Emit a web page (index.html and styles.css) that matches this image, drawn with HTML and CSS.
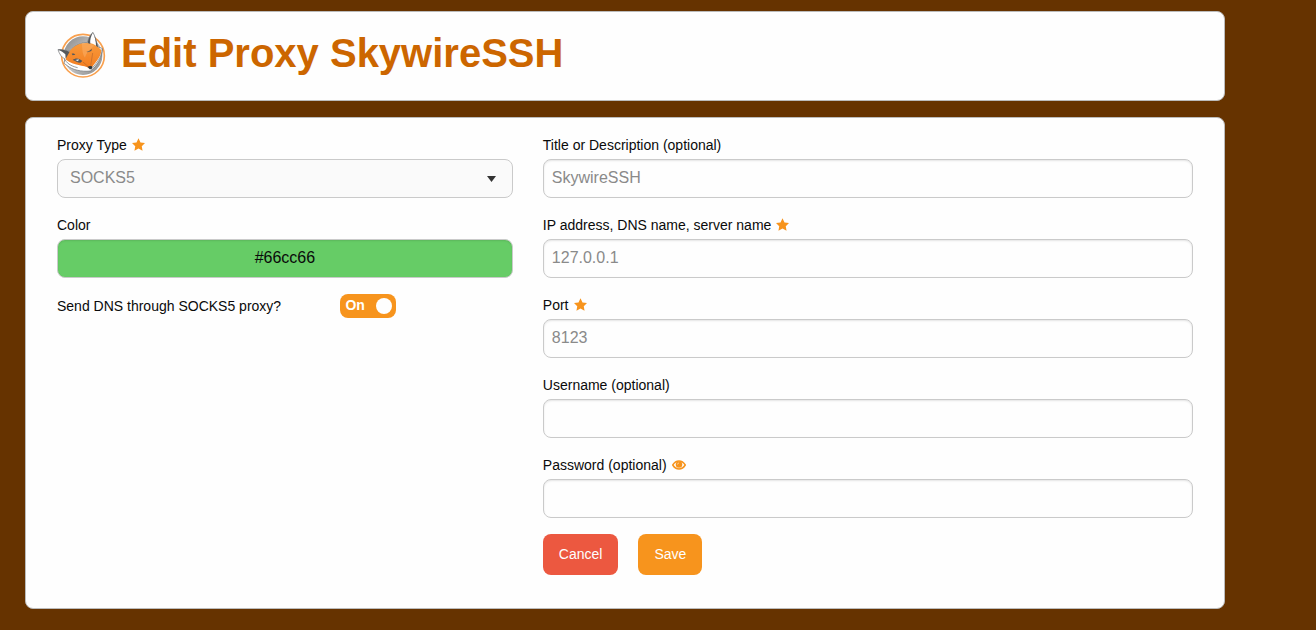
FILE: index.html
```html
<!DOCTYPE html>
<html lang="en">
<head>
<meta charset="utf-8">
<meta name="viewport" content="width=device-width, initial-scale=1">
<title>Edit Proxy SkywireSSH</title>
<link rel="stylesheet" href="styles.css">
</head>
<body>
<svg class="sprite" aria-hidden="true">
  <symbol id="star" viewBox="0 0 26 25"><path d="M13 0l4 8.300 9 1.300-6.500 6.300 1.600 9L13 20.600 4.900 24.900l1.600-9L0 9.600l9-1.300z"/></symbol>
</svg>
<main class="page">
  <header class="card card-header">
    <svg class="logo" viewBox="21 18 150 144" aria-hidden="true">
      <defs>
        <linearGradient id="disc" x1="0" y1="0" x2="1" y2="1">
          <stop offset="0" stop-color="#858585"/><stop offset=".5" stop-color="#c4c4c4"/><stop offset="1" stop-color="#858585"/>
        </linearGradient>
        <linearGradient id="fur" x1="0" y1="0" x2="0" y2="1">
          <stop offset="0" stop-color="#f79a3c"/><stop offset="1" stop-color="#f47d20"/>
        </linearGradient>
      </defs>
      <circle cx="99" cy="92" r="64" fill="#fff" stroke="#f9a04e" stroke-width="5"/>
      <circle cx="99" cy="92" r="58" fill="url(#disc)"/>
      <path d="M24 74C36 73 49 76 59 79C71 63 92 53 113 52C115 40 121 28 129 22C135 33 140 50 143 66L157 70C158 95 143 122 121 138C94 141 66 134 52 122L42 115L45 102C34 97 28 86 24 74Z" fill="#fff" stroke="#66696c" stroke-width="2" stroke-linejoin="round"/>
      <path d="M59 79C69 63 90 53 113 54C130 54 145 64 154 76C154 94 139 110 127 125L120 130C100 118 72 124 48 104C46 93 49 85 59 79Z" fill="url(#fur)"/>
      <path d="M95 57C111 52 124 56 133 62C120 73 109 83 105 98C95 84 98 70 95 57Z" fill="#fbb26b" opacity=".5"/>
      <path d="M24 74C36 72 49 76 59 80L47 101L46 88C40 81 34 79 24 74ZM129 22C120 30 115 41 113 54L121 57C119 45 123 34 129 22ZM131 27C138 42 141 54 144 67L138 62C138 50 135 38 131 27Z" fill="#55585b"/>
      <path d="M157 71C157 92 142 112 126 130M45 104C53 119 70 125 83 128" fill="none" stroke="#66696c" stroke-width="2"/>
      <path d="M68 105C76 98 88 99 97 108L91 113C82 113 76 108 68 105ZM109 80C114 81 121 76 126 71L124 78L113 82ZM65 86C69 84 74 86 76 89L68 91Z" fill="#55585b"/>
      <path d="M76 105L87 103L84 109Z" fill="#e8eef0"/>
      <path d="M112 125Q119 122 127 124L125 133L119 133Z" fill="#33373a"/>
      <path d="M99 111L116 126M128 84L122 122" stroke="#b9682d" stroke-width="2"/>
    </svg>
    <h1 class="title">Edit Proxy SkywireSSH</h1>
  </header>

  <form class="card card-form">
    <section class="column column-left">
      <div class="field">
        <div class="label-row"><label for="type">Proxy Type</label><svg class="star" aria-hidden="true"><use href="#star"/></svg></div>
        <select class="control select" id="type"><option>SOCKS5</option><option>HTTP</option></select>
      </div>
      <div class="field">
        <div class="label-row"><label for="color">Color</label></div>
        <input class="control color" id="color" type="text" value="#66cc66">
      </div>
      <div class="switch-row">
        <label for="dns">Send DNS through SOCKS5 proxy?</label>
        <label class="switch">
          <input class="switch-input" id="dns" type="checkbox" checked>
          <span class="switch-text">On</span><span class="knob"></span>
        </label>
      </div>
    </section>

    <section class="column column-right">
      <div class="field">
        <div class="label-row"><label for="name">Title or Description (optional)</label></div>
        <input class="control" id="name" type="text" value="SkywireSSH">
      </div>
      <div class="field">
        <div class="label-row"><label for="address">IP address, DNS name, server name</label><svg class="star" aria-hidden="true"><use href="#star"/></svg></div>
        <input class="control" id="address" type="text" value="127.0.0.1">
      </div>
      <div class="field">
        <div class="label-row"><label for="port">Port</label><svg class="star" aria-hidden="true"><use href="#star"/></svg></div>
        <input class="control" id="port" type="text" value="8123">
      </div>
      <div class="field">
        <div class="label-row"><label for="user">Username (optional)</label></div>
        <input class="control" id="user" type="text">
      </div>
      <div class="field">
        <div class="label-row"><label for="password">Password (optional)</label><button class="reveal" type="button" aria-label="Show password"><svg class="eye" viewBox="0 0 28 20" aria-hidden="true"><path d="M1.500 10C8-.5 20-.5 26.500 10C20 20.500 8 20.500 1.500 10Z" fill="none" stroke="currentColor" stroke-width="3"/><circle cx="14" cy="9" r="6.500" fill="currentColor"/><path d="M11 9Q11 6 14 6" fill="none" stroke="#fff" stroke-width="1"/></svg></button></div>
        <input class="control" id="password" type="password">
      </div>
      <div class="actions">
        <button class="button cancel" type="button">Cancel</button>
        <button class="button save" type="submit">Save</button>
      </div>
    </section>
  </form>
</main>
</body>
</html>
```
FILE: styles.css
```css
*, *::before, *::after { box-sizing: border-box; }

body {
  margin: 0;
  background: #663300;
  color: #0a0a0a;
  font-family: "Liberation Sans", Arial, sans-serif;
  font-size: 14px;
  line-height: 24px;
}

.sprite { display: none; }

.page {
  display: flex;
  flex-direction: column;
  gap: 16px;
  max-width: 1225px;
  padding: 11px 0 21px 25px;
}

.card {
  padding: 16px 31px;
  background: #fefefe;
  border: 1px solid #bbb;
  border-radius: 8px;
}

.card-header {
  display: flex;
  align-items: flex-start;
  gap: 14px;
}

.logo { flex: none; width: 50px; height: 48px; margin-top: 3px; }

.title {
  margin: 0;
  color: #cc6600;
  font-size: 40px;
  line-height: 50px;
  padding-bottom: 6px;
}

.card-form {
  display: grid;
  grid-template-columns: repeat(12, minmax(0, 1fr));
  column-gap: 30px;
  padding-bottom: 33px;
}

.column { display: flex; flex-direction: column; gap: 16px; }
.column-left { grid-column: span 5; }
.column-right { grid-column: span 7; }

.label-row { display: flex; align-items: center; gap: 5px; height: 25px; padding-bottom: 4px; }

.star { width: 13px; height: 13px; fill: #f7941d; }

.control {
  display: block;
  width: 100%;
  height: 39px;
  margin: 0;
  padding: 0 8px 2px;
  border: 1px solid #cacaca;
  border-radius: 8px;
  background: #fefefe;
  box-shadow: inset 0 1px 2px rgba(10, 10, 10, 0.1);
  color: #8a8a8a;
  font: 16px "Liberation Sans", Arial, sans-serif;
}

.select {
  appearance: none;
  padding-left: 12px;
  background: #fafafa url("data:image/svg+xml,%3Csvg xmlns='http://www.w3.org/2000/svg' width='9' height='6'%3E%3Cpath d='M0 0h9L4.500 6z' fill='%23333'/%3E%3C/svg%3E") no-repeat right 16px center;
  box-shadow: none;
}

.color { background: #66cc66; color: #0a0a0a; text-align: center; }

.switch-row {
  display: grid;
  grid-template-columns: 7fr 5fr;
  align-items: center;
  width: calc(100% + 30px);
}

.switch {
  display: flex;
  align-items: center;
  justify-content: space-between;
  position: relative;
  width: 56px;
  height: 24px;
  padding: 0 4px 0 5px;
  border-radius: 8px;
  background: #f7941d;
  color: #fff;
  font-weight: bold;
}

.switch-input { position: absolute; inset: 0; width: 100%; height: 100%; margin: 0; opacity: 0; }
.switch-text { padding-bottom: 2px; }
.knob { width: 16px; height: 16px; border-radius: 50%; background: #fefefe; }

.reveal { display: flex; padding: 0; border: 0; background: none; color: #f7941d; }
.eye { width: 14px; height: 10px; }

.actions { display: flex; gap: 20px; }

.button {
  height: 41px;
  padding: 0 16px 2px;
  border: 0;
  border-radius: 8px;
  color: #fefefe;
  font: 14px "Liberation Sans", Arial, sans-serif;
}

.cancel { background: #ec5840; }
.save { background: #f7941d; }
```
